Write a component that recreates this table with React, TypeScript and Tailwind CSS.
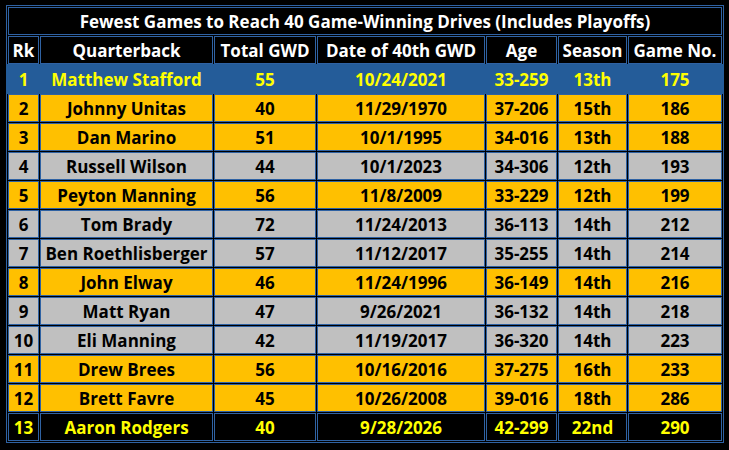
import React from "react";

type Row = [string, string, string, string, string, string, string];

const rows: { d: Row; kind: "blue" | "gold" | "gray" | "black" }[] = [
  { d: ["1", "Matthew Stafford", "55", "10/24/2021", "33-259", "13th", "175"], kind: "blue" },
  { d: ["2", "Johnny Unitas", "40", "11/29/1970", "37-206", "15th", "186"], kind: "gold" },
  { d: ["3", "Dan Marino", "51", "10/1/1995", "34-016", "13th", "188"], kind: "gold" },
  { d: ["4", "Russell Wilson", "44", "10/1/2023", "34-306", "12th", "193"], kind: "gray" },
  { d: ["5", "Peyton Manning", "56", "11/8/2009", "33-229", "12th", "199"], kind: "gold" },
  { d: ["6", "Tom Brady", "72", "11/24/2013", "36-113", "14th", "212"], kind: "gray" },
  { d: ["7", "Ben Roethlisberger", "57", "11/12/2017", "35-255", "14th", "214"], kind: "gray" },
  { d: ["8", "John Elway", "46", "11/24/1996", "36-149", "14th", "216"], kind: "gold" },
  { d: ["9", "Matt Ryan", "47", "9/26/2021", "36-132", "14th", "218"], kind: "gray" },
  { d: ["10", "Eli Manning", "42", "11/19/2017", "36-320", "14th", "223"], kind: "gray" },
  { d: ["11", "Drew Brees", "56", "10/16/2016", "37-275", "16th", "233"], kind: "gold" },
  { d: ["12", "Brett Favre", "45", "10/26/2008", "39-016", "18th", "286"], kind: "gold" },
  { d: ["13", "Aaron Rodgers", "40", "9/28/2026", "42-299", "22nd", "290"], kind: "black" },
];

const header: Row = ["Rk", "Quarterback", "Total GWD", "Date of 40th GWD", "Age", "Season", "Game No."];

const cols = "grid grid-cols-[31px_173px_102px_168px_71px_69px_94px] gap-px";

const cellKind: Record<string, string> = {
  blue: "bg-[#245c99] border-[#245c99] text-[#ffff00]",
  gold: "bg-[#ffc000] border-[#2f62a3] text-black",
  gray: "bg-[#c0c0c0] border-[#2f62a3] text-black",
  black: "bg-black border-[#2f62a3] text-[#ffff00]",
  head: "bg-black border-[#2f62a3] text-white",
};

function Cells({ d, kind }: { d: Row; kind: string }) {
  return (
    <>
      {d.map((t, i) => (
        <div
          key={i}
          className={`h-[28px] border flex items-center justify-center whitespace-nowrap ${cellKind[kind]}`}
        >
          {t}
        </div>
      ))}
    </>
  );
}

export default function App() {
  return (
    <div
      className="w-[729px] h-[450px] bg-black pl-[6px] pt-[5px] font-bold text-[17px] leading-none"
      style={{ fontFamily: '"Open Sans", "Noto Sans", sans-serif' }}
    >
      <div className="w-[718px] border border-[#2f62a3] p-px flex flex-col gap-px">
        <div className="h-[28px] border border-[#2f62a3] bg-black text-white flex items-center justify-center">
          Fewest Games to Reach 40 Game-Winning Drives (Includes Playoffs)
        </div>
        <div className={cols}>
          <Cells d={header} kind="head" />
        </div>
        {rows.map((r, i) =>
          r.kind === "blue" ? (
            <div key={i} className="-mx-[2px] -my-px bg-[#245c99] px-[2px] py-px">
              <div className={cols}>
                <Cells d={r.d} kind={r.kind} />
              </div>
            </div>
          ) : (
            <div key={i} className={cols}>
              <Cells d={r.d} kind={r.kind} />
            </div>
          )
        )}
      </div>
    </div>
  );
}
